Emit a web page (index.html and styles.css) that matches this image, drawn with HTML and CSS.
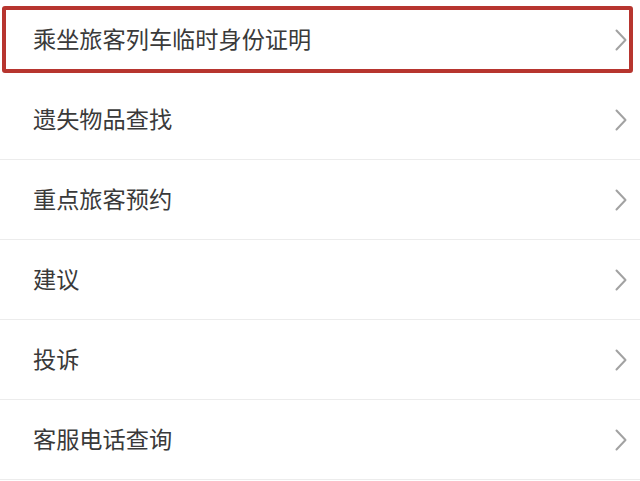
FILE: index.html
```html
<!DOCTYPE html>
<html lang="zh-CN">
<head>
<meta charset="utf-8">
<link rel="stylesheet" href="styles.css">
</head>
<body>
<ul class="menu">
  <li class="item highlight"><span class="label">乘坐旅客列车临时身份证明</span><svg class="chev" width="12" height="22" viewBox="0 0 12 22"><polyline points="1.5,1.5 10.5,11 1.5,20.5"/></svg></li>
  <li class="item"><span class="label">遗失物品查找</span><svg class="chev" width="12" height="22" viewBox="0 0 12 22"><polyline points="1.5,1.5 10.5,11 1.5,20.5"/></svg></li>
  <li class="item"><span class="label">重点旅客预约</span><svg class="chev" width="12" height="22" viewBox="0 0 12 22"><polyline points="1.5,1.5 10.5,11 1.5,20.5"/></svg></li>
  <li class="item"><span class="label">建议</span><svg class="chev" width="12" height="22" viewBox="0 0 12 22"><polyline points="1.5,1.5 10.5,11 1.5,20.5"/></svg></li>
  <li class="item"><span class="label">投诉</span><svg class="chev" width="12" height="22" viewBox="0 0 12 22"><polyline points="1.5,1.5 10.5,11 1.5,20.5"/></svg></li>
  <li class="item"><span class="label">客服电话查询</span><svg class="chev" width="12" height="22" viewBox="0 0 12 22"><polyline points="1.5,1.5 10.5,11 1.5,20.5"/></svg></li>
</ul>
</body>
</html>
```
FILE: styles.css
```css
html, body {
  margin: 0;
  padding: 0;
  background: #ffffff;
}
body {
  width: 640px;
  height: 481px;
  overflow: hidden;
  font-family: "Noto Sans CJK SC", "Noto Sans", sans-serif;
}
.menu {
  list-style: none;
  margin: 0;
  padding: 0;
}
.item {
  position: relative;
  box-sizing: border-box;
  height: 80px;
  display: flex;
  align-items: center;
  justify-content: space-between;
  padding: 0 13px 0 33px;
  border-bottom: 1px solid #ececec;
}
.item.highlight {
  border-bottom-color: transparent;
}
.item.highlight::after {
  content: "";
  position: absolute;
  left: 2px;
  top: 6px;
  width: 631px;
  height: 67px;
  box-sizing: border-box;
  border: 4px solid #b7352f;
  border-radius: 3px;
}
.label {
  font-size: 23.2px;
  line-height: 1;
  color: #3a3a3a;
  margin-top: -1px;
}
.chev {
  flex: none;
  fill: none;
  stroke: #a2a2a2;
  stroke-width: 2;
  stroke-linecap: round;
  stroke-linejoin: round;
}
```
